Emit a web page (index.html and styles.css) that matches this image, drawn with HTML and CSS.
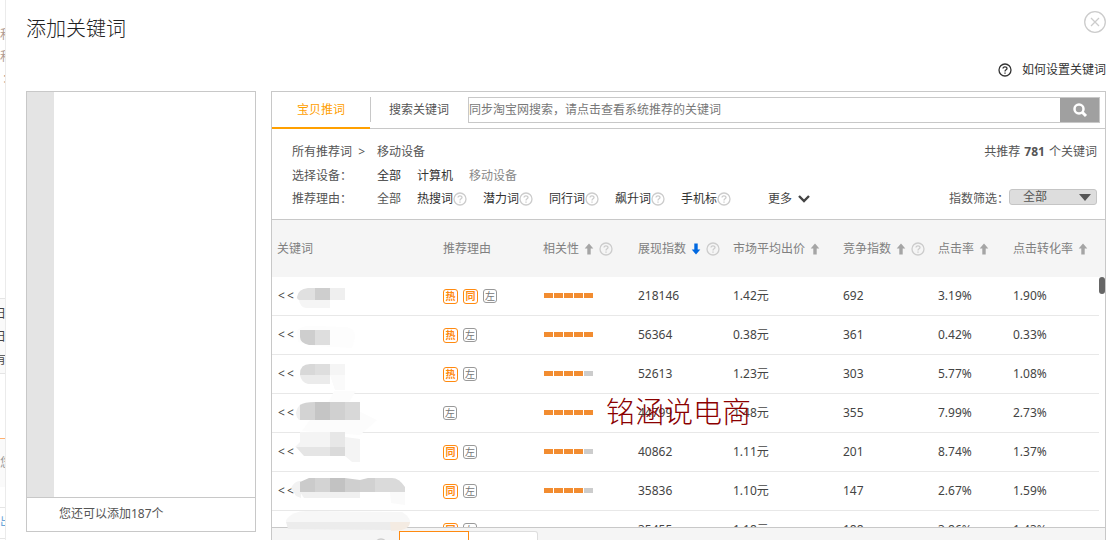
FILE: index.html
```html
<!DOCTYPE html>
<html lang="zh-CN">
<head>
<meta charset="utf-8">
<title>添加关键词</title>
<link rel="stylesheet" href="styles.css">
</head>
<body>
<svg class="defs" width="0" height="0" aria-hidden="true">
  <symbol id="help" viewBox="0 0 14 14"><circle cx="7" cy="7" r="6" fill="none" stroke="currentColor" stroke-width="1.3"/><path d="M5 5.6C5 3.2 9 3.2 9 5.5C9 6.900 7 6.800 7 8.500M7 9.600V10.800" fill="none" stroke="currentColor" stroke-width="1.3"/></symbol>
  <symbol id="up" viewBox="0 0 10 12"><path d="M5 0.500L9.300 5.500H6.700V11.500H3.300V5.500H0.700Z" fill="currentColor"/></symbol>
  <symbol id="down" viewBox="0 0 10 12"><path d="M5 11.500L9.300 6.500H6.700V0.500H3.300V6.500H0.700Z" fill="currentColor"/></symbol>
</svg>
<div class="page">
  <aside class="behind" aria-hidden="true">
    <div class="b-top"><p>和</p><p>和</p><p class="colon">：</p></div>
    <div class="b-dates"><p>日</p><p>日</p><p>有</p></div>
    <div class="b-gap"></div>
    <div class="b-note">您</div>
    <div class="b-space"></div>
    <div class="b-link">出</div>
  </aside>
  <main class="dialog">
    <header class="title-bar">
      <h1>添加关键词</h1>
      <button class="close" type="button" aria-label="关闭"><svg width="22" height="22" viewBox="0 0 22 22" fill="none" stroke="currentColor"><circle cx="11" cy="11" r="10.300" stroke-width="1.300"/><path d="M7 7L15 15M15 7L7 15" stroke-width="1.300"/></svg></button>
    </header>
    <div class="how"><a href="#how"><svg width="14" height="14"><use href="#help"/></svg>如何设置关键词</a></div>
    <div class="columns">
      <section class="chosen">
        <div class="chosen-body"><div class="line-numbers"></div><textarea aria-label="已选关键词"></textarea></div>
        <p class="remain">您还可以添加187个</p>
      </section>
      <section class="picker">
        <div class="tabs">
          <button class="tab active" type="button">宝贝推词</button>
          <button class="tab" type="button">搜索关键词</button>
          <form class="search">
            <input type="text" aria-label="搜索" placeholder="同步淘宝网搜索，请点击查看系统推荐的关键词">
            <button type="button" aria-label="搜索"><svg width="16" height="16" viewBox="0 0 16 16" fill="none" stroke="#fff"><circle cx="7" cy="7" r="4.500" stroke-width="2.500"/><path d="M10.500 10.500L14 14" stroke-width="3"/></svg></button>
          </form>
        </div>
        <div class="filters">
          <div class="f-row"><span class="f-label crumb">所有推荐词&nbsp; &gt;</span><span>移动设备</span><span class="right">共推荐 <b>781</b> 个关键词</span></div>
          <div class="f-row"><span class="f-label">选择设备<span class="colon">：</span></span><a class="dark" href="#all">全部</a><a class="dark" href="#pc">计算机</a><a class="muted" href="#mobile">移动设备</a></div>
          <div class="f-row last">
            <span class="f-label">推荐理由<span class="colon">：</span></span><a href="#r0">全部</a>
            <a class="dark tip" href="#r1">热搜词<svg width="14" height="14"><use href="#help"/></svg></a>
            <a class="dark tip" href="#r2">潜力词<svg width="14" height="14"><use href="#help"/></svg></a>
            <a class="dark tip" href="#r3">同行词<svg width="14" height="14"><use href="#help"/></svg></a>
            <a class="dark tip" href="#r4">飙升词<svg width="14" height="14"><use href="#help"/></svg></a>
            <a class="dark tip" href="#r5">手机标<svg width="14" height="14"><use href="#help"/></svg></a>
            <button class="more" type="button">更多<svg width="12" height="8" viewBox="0 0 12 8" fill="none" stroke="currentColor" stroke-width="2.400"><path d="M1 1L6 6L11 1"/></svg></button>
            <label class="right" for="index-filter">指数筛选<span class="colon">：</span></label>
            <span class="select"><select id="index-filter"><option>全部</option></select><svg width="12" height="7" viewBox="0 0 12 7"><path d="M0 0H12L6 7Z" fill="#555"/></svg></span>
          </div>
        </div>
        <div class="results">
          <div class="scroller">
            <table>
              <colgroup><col class="c-key"><col class="c-why"><col class="c-std"><col class="c-std"><col class="c-price"><col class="c-std"><col class="c-ctr"><col class="c-cvr"><col class="c-gutter"></colgroup>
              <thead><tr>
                <th><span class="h">关键词</span></th>
                <th><span class="h">推荐理由</span></th>
                <th><span class="h">相关性<svg class="arrow" width="10" height="12"><use href="#up"/></svg><svg class="q" width="14" height="14"><use href="#help"/></svg></span></th>
                <th><span class="h">展现指数<svg class="arrow sorted" width="10" height="12"><use href="#down"/></svg><svg class="q" width="14" height="14"><use href="#help"/></svg></span></th>
                <th><span class="h">市场平均出价<svg class="arrow" width="10" height="12"><use href="#up"/></svg></span></th>
                <th><span class="h">竞争指数<svg class="arrow" width="10" height="12"><use href="#up"/></svg><svg class="q" width="14" height="14"><use href="#help"/></svg></span></th>
                <th><span class="h">点击率<svg class="arrow" width="10" height="12"><use href="#up"/></svg></span></th>
                <th><span class="h">点击转化率<svg class="arrow" width="10" height="12"><use href="#up"/></svg></span></th>
                <th></th>
              </tr></thead>
              <tbody>
                <tr><td><span class="key"><i>&lt;</i><i>&lt;</i></span></td><td><span class="tags"><i class="tag">热</i><i class="tag">同</i><i class="tag grey">左</i></span></td><td><span class="bars"><i></i><i></i><i></i><i></i><i></i></span></td><td>218146</td><td>1.42元</td><td>692</td><td>3.19%</td><td>1.90%</td><td></td></tr>
                <tr><td><span class="key"><i>&lt;</i><i>&lt;</i></span></td><td><span class="tags"><i class="tag">热</i><i class="tag grey">左</i></span></td><td><span class="bars"><i></i><i></i><i></i><i></i><i></i></span></td><td>56364</td><td>0.38元</td><td>361</td><td>0.42%</td><td>0.33%</td><td></td></tr>
                <tr><td><span class="key"><i>&lt;</i><i>&lt;</i></span></td><td><span class="tags"><i class="tag">热</i><i class="tag grey">左</i></span></td><td><span class="bars"><i></i><i></i><i></i><i></i><i class="off"></i></span></td><td>52613</td><td>1.23元</td><td>303</td><td>5.77%</td><td>1.08%</td><td></td></tr>
                <tr><td><span class="key"><i>&lt;</i><i>&lt;</i></span></td><td><span class="tags"><i class="tag grey">左</i></span></td><td><span class="bars"><i></i><i></i><i></i><i></i><i></i></span></td><td>44799</td><td>1.48元</td><td>355</td><td>7.99%</td><td>2.73%</td><td></td></tr>
                <tr><td><span class="key"><i>&lt;</i><i>&lt;</i></span></td><td><span class="tags"><i class="tag">同</i><i class="tag grey">左</i></span></td><td><span class="bars"><i></i><i></i><i></i><i></i><i class="off"></i></span></td><td>40862</td><td>1.11元</td><td>201</td><td>8.74%</td><td>1.37%</td><td></td></tr>
                <tr><td><span class="key"><i>&lt;</i><i>&lt;</i></span></td><td><span class="tags"><i class="tag">同</i><i class="tag grey">左</i></span></td><td><span class="bars"><i></i><i></i><i></i><i></i><i class="off"></i></span></td><td>35836</td><td>1.10元</td><td>147</td><td>2.67%</td><td>1.59%</td><td></td></tr>
                <tr><td></td><td><span class="tags"><i class="tag">同</i><i class="tag grey">左</i></span></td><td></td><td>35455</td><td>1.18元</td><td>188</td><td>3.86%</td><td>1.43%</td><td></td></tr>
              </tbody>
            </table>
          </div>
          <div class="thumb"></div>
          <svg class="masks" width="150" height="260" viewBox="0 0 150 260" aria-hidden="true">
            <path d="M25 20Q26 12 36 11H43V23H28Q25 23 25 20" fill="#e0e0e0"/><path d="M43 11H58V23H43Z" fill="#cecece"/><path d="M58 11H73V23H58Z" fill="#efefef"/><path d="M27 23H58V31H34Q28 30 27 23" fill="#f5f5f5"/>
            <path d="M25 54Q29 48 43 49L75 50Q84 53 83 61L80 71L43 69L26 65Z" fill="#fdfdfd"/><path d="M28 53H43V68H37Q28 66 28 60Z" fill="#cecece"/><path d="M43 53H58V68H43Z" fill="#dedede"/>
            <path d="M28 97Q28 87 38 87H43V98H28Z" fill="#d8d8d8"/><path d="M43 87H58V98H43Z" fill="#dedede"/><path d="M58 87H73V98H58Z" fill="#f5f5f5"/><path d="M28 98H58V107H36Q29 105 28 98" fill="#ebebeb"/><path d="M58 98H73V113H63Z" fill="#fafafa"/>
            <path d="M62 114H84L75 128L105 143L88 158L30 154L38 143L55 128Z" fill="#fcfcfc"/>
            <path d="M24 136Q25 130 29 127V143H27Q24 140 24 136" fill="#f0f0f0"/><path d="M28 128Q32 125 43 125V143H28Z" fill="#d3d3d3"/><path d="M43 125H58V143H43Z" fill="#c5c5c5"/><path d="M58 125H73V143H58Z" fill="#d0d0d0"/><path d="M73 125H88V143H73Z" fill="#d8d8d8"/>
            <path d="M28 155H58V170H23L28 165Z" fill="#f4f4f4"/><path d="M58 155H73V170H58Z" fill="#e7e7e7"/><path d="M24 170H58V179H32Z" fill="#e5e5e5"/><path d="M58 170H73V179H58Z" fill="#dadada"/><path d="M73 160L88 162V185H80L73 179Z" fill="#f4f4f4"/>
            <path d="M19 211Q23 203 29 204V221L24 219Z" fill="#f2f2f2"/><path d="M28 205L37 201H43V215H28Z" fill="#cbcbcb"/><path d="M43 201H58V215H43Z" fill="#d3d3d3"/><path d="M58 201H73V215H58Z" fill="#c2c2c2"/><path d="M73 201L88 203V215H73Z" fill="#cfcfcf"/><path d="M88 203L96 201H103V215H88Z" fill="#d1d1d1"/><path d="M103 201H120Q127 201 133 210V215H103Z" fill="#dadada"/><path d="M28 215H88V221H32Z" fill="#f0f0f0"/><path d="M118 215H133V228L119 226Z" fill="#fafafa"/>
            <path d="M14 243Q20 234 35 234L130 235Q138 240 138 245H14Z" fill="#f7f7f7"/><path d="M14 245H119V253L16 252Z" fill="#ececec"/><path d="M118 245H138Q138 254 119 254Z" fill="#f4ebe2"/>
          </svg>
          <div class="watermark">铭涵说电商</div>
        </div>
        <footer class="actions"><svg class="q" width="14" height="14"><use href="#help"/></svg><button class="act first" type="button" aria-label="主要操作"></button><button class="act" type="button" aria-label="次要操作"></button></footer>
      </section>
    </div>
  </main>
</div>
</body>
</html>
```
FILE: styles.css
```css
* { box-sizing: border-box; }
body { margin: 0; background: #fff; color: #555; font: 12px/18px "Noto Sans", "Noto Sans CJK SC", sans-serif; }
h1, p { margin: 0; font-weight: 400; }
button, input, select, textarea { margin: 0; padding: 0; border: 0; background: none; color: inherit; font: inherit; border-radius: 0; }
a { color: inherit; text-decoration: none; }
svg { display: block; flex: none; }
i { font-style: normal; }
.defs { position: absolute; }
.colon { font-family: "Noto Sans CJK TC", sans-serif; line-height: 1; }

.page { display: flex; height: 100vh; overflow: hidden; }
.behind { flex: none; width: 6px; overflow: hidden; border-right: 1px solid #ebebeb; color: #999; }
.behind p { margin-left: -6px; width: 12px; }
.b-top { height: 299px; padding-top: 24px; line-height: 22px; border-bottom: 1px solid #e5e5e5; color: #b09a90; }
.b-top p { margin-left: 0; }
.b-top .colon { margin-left: -1px; line-height: 22px; }
.b-dates { height: 75px; padding-top: 3px; line-height: 23px; background: #fafafa; border-bottom: 1px solid #e5e5e5; color: #444; }
.b-gap { height: 65px; border-bottom: 1px solid #ffb070; }
.b-note { height: 48px; line-height: 48px; background: #fafafa; }
.b-space { height: 21px; border-bottom: 1px solid #e5e5e5; }
.b-link { height: 31px; line-height: 28px; border-bottom: 1px solid #e5e5e5; color: #6aa5d8; }

.dialog { flex: 1; min-width: 0; padding: 0 7px 0 20px; }
.title-bar { display: flex; justify-content: space-between; align-items: flex-start; height: 56px; padding-top: 11px; }
.title-bar h1 { padding-top: 2px; font-size: 20px; line-height: 32px; font-weight: 300; color: #222; }
.close { color: #ccc; }
.how { display: flex; justify-content: flex-end; height: 35px; color: #333; }
.how a { display: flex; align-items: center; gap: 10px; height: 28px; }

.columns { display: flex; align-items: flex-start; gap: 15px; }
.chosen { flex: none; width: 230px; border: 1px solid #c8c8c8; }
.chosen-body { display: flex; height: 405px; }
.line-numbers { width: 27px; background: #e4e4e4; }
.chosen textarea { flex: 1; min-width: 0; resize: none; }
.remain { height: 34px; padding-left: 32px; border-top: 1px solid #c8c8c8; line-height: 32px; }

.picker { flex: 1; min-width: 0; border: 1px solid #c8c8c8; }
.tabs { display: flex; height: 37px; border-bottom: 1px solid #c8c8c8; }
.tab { width: 98px; height: 36px; background: linear-gradient(#c8c8c8, #c8c8c8) left 5px / 1px 25px no-repeat; }
.tab.active { height: 37px; color: #ffa000; border-bottom: 2px solid #ffa000; background: none; }
.search { display: flex; flex: 1; height: 26px; margin: 5px 5px 0 0; border: 1px solid #c8c8c8; }
.search input { flex: 1; min-width: 0; }
.search input::placeholder { color: #777; opacity: 1; }
.search button { display: grid; place-items: center; width: 39px; background: #a0a0a0; }

.filters { height: 91px; padding: 11px 8px 0 20px; border-bottom: 1px solid #c8c8c8; }
.f-row { display: flex; align-items: center; gap: 16px; height: 24px; white-space: nowrap; }
.f-row.last { height: 22px; }
.f-label { width: 69px; }
.right { margin-left: auto; }
.right b { margin: 0 1px; }
.dark { color: #333; }
.muted { color: #888; }
.tip { display: flex; align-items: center; }
.tip svg, .q { color: #ccc; }
.more { display: flex; align-items: center; gap: 6px; margin-left: 21px; color: #444; }
.select { position: relative; align-self: flex-start; width: 88px; height: 16px; margin-top: 1px; margin-left: -16px; }
.select select { display: block; width: 100%; height: 16px; padding-left: 13px; appearance: none; border: 1px solid #c5c5c5; border-radius: 3px; background: #ddd; line-height: 14px; }
.select svg { position: absolute; right: 6px; top: 5px; pointer-events: none; }
label.right { width: 60px; }

.results { position: relative; border-bottom: 1px solid #c8c8c8; }
.scroller { height: 307px; overflow: hidden; }
table { width: 100%; table-layout: fixed; border-collapse: separate; border-spacing: 0; }
.c-key { width: 166px; }
.c-why { width: 100px; }
.c-std { width: 95px; }
.c-price { width: 110px; }
.c-ctr { width: 75px; }
.c-cvr { width: 91px; }
.c-gutter { width: 6px; }
th { height: 57px; padding: 0 0 0 5px; background: #f5f5f5; color: #808080; font-weight: 400; text-align: left; }
.h { display: flex; align-items: center; white-space: nowrap; }
.arrow { margin-left: 5px; color: #a5a5a5; }
.arrow.sorted { color: #0068e0; }
.h .q { margin-left: 5px; }
td { height: 39px; padding: 0 0 0 5px; border-bottom: 1px solid #e8e8e8; color: #444; }
th:last-child, td:last-child { padding: 0; border: 0; }
.key { display: flex; gap: 2px; padding-left: 1px; }
.tags { display: flex; align-items: center; gap: 5px; }
.tag { display: grid; place-items: center; width: 15px; height: 15px; border: 1px solid #ff8a10; border-radius: 3px; color: #ff8a10; font-size: 10px; line-height: 12px; font-weight: 700; }
.tag.grey { width: 14px; height: 14px; border-color: #999; color: #777; font-weight: 400; }
.bars { display: flex; gap: 1px; padding: 0 0 2px 1px; }
.bars i { width: 9px; height: 5px; background: #f28c30; }
.bars .off { background: #ccc; }
.thumb { position: absolute; top: 57px; right: 0; width: 6px; height: 17px; border-radius: 3px; background: #666; }
.masks { position: absolute; top: 57px; left: 0; pointer-events: none; }
.watermark { position: absolute; top: 172px; left: 334px; color: #8b0000; font-size: 29px; line-height: 40px; font-weight: 300; pointer-events: none; white-space: nowrap; }

.actions { display: flex; height: 60px; padding: 3px 0 0 102px; background: #f5f5f5; }
.actions .q { margin: 7px 11px 0 0; }
.act { width: 69px; height: 30px; border: 1px solid #ddd; border-left: 0; border-radius: 0 3px 3px 0; background: #fff; }
.act.first { width: 70px; border: 1px solid #ff8a10; border-radius: 0; }
```
